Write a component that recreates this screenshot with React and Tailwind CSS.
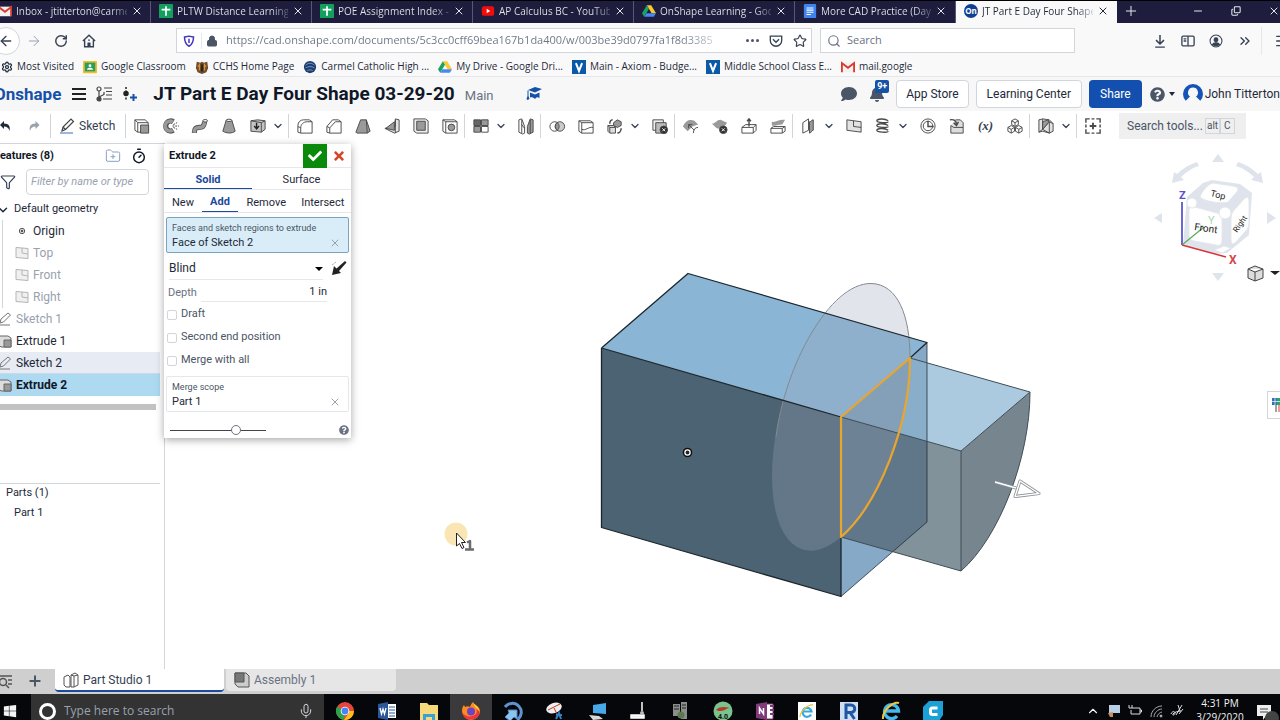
import {
  ArrowLeft,
  ArrowRight,
  ChevronDown,
  ChevronUp,
  ChevronsRight,
  Copy,
  Filter,
  FolderPlus,
  Lock,
  Menu,
  Mic,
  Minus,
  Plus,
  RotateCw,
  Search,
  Settings,
  Star,
  Timer,
  X,
} from "lucide-react";
import { FaBell, FaCheck, FaComment, FaQuestionCircle, FaTimes, FaWindows } from "react-icons/fa";

/* ---------- small brand icons ---------- */

const GmailIcon = () => (
  <svg viewBox="0 0 16 16" className="size-3.5 shrink-0" aria-hidden="true">
    <path d="M1 3h14v11H1z" fill="#f1f1f1" />
    <path d="M1 14V3.5l7 5.5 7-5.5V14" fill="none" stroke="#d93a2f" strokeWidth="2.2" />
  </svg>
);

const SheetsIcon = () => (
  <svg viewBox="0 0 16 16" className="size-3.5 shrink-0" aria-hidden="true">
    <rect width="16" height="16" rx="1" fill="#12a05c" />
    <path d="M8 2.5v11M3 6.5h10" stroke="#fff" strokeWidth="2" />
  </svg>
);

const YoutubeIcon = () => (
  <svg viewBox="0 0 16 16" className="size-3.5 shrink-0" aria-hidden="true">
    <rect x="1" y="2.5" width="14" height="11" rx="2.5" fill="#f20d0d" />
    <path d="M6.5 5.5v5l4-2.5z" fill="#fff" />
  </svg>
);

const DriveIcon = () => (
  <svg viewBox="0 0 16 16" className="size-3.5 shrink-0" aria-hidden="true">
    <path d="M5.5 1.5h5L16 10.5h-5z" fill="#fbc92d" />
    <path d="M5.5 1.5 0 10.5l2.5 4L8 5.5z" fill="#1aa260" />
    <path d="M5 10.5h11l-2.5 4h-11z" fill="#4688f4" />
  </svg>
);

const DocsIcon = () => (
  <svg viewBox="0 0 16 16" className="size-3.5 shrink-0" aria-hidden="true">
    <rect x="1" width="14" height="16" rx="1" fill="#3f83f1" />
    <path d="M4 4.5h8M4 7h8M4 9.5h8M4 12h5" stroke="#fff" strokeWidth="1.2" />
  </svg>
);

const OnIcon = () => (
  <span className="flex size-3.5 shrink-0 items-center justify-center rounded-full bg-[#0f3f94] text-[8px] font-bold text-white">On</span>
);

const ClassroomIcon = () => (
  <svg viewBox="0 0 16 16" className="size-3.5 shrink-0" aria-hidden="true">
    <rect y="1" width="16" height="14" rx="1" fill="#f2bd28" />
    <rect x="2" y="3" width="12" height="10" fill="#2b9e5b" />
    <circle cx="8" cy="6.5" r="1.6" fill="#fff" />
    <path d="M4.5 11c.5-3 6.5-3 7 0z" fill="#fff" />
  </svg>
);

const CrestIcon = () => (
  <svg viewBox="0 0 16 16" className="size-3.5 shrink-0" aria-hidden="true">
    <path d="M2 2l4 1 2-1 2 1 4-1 1 7-2 5-5 2-5-2-2-5z" fill="#6e4a2a" />
    <path d="M5 4v8M11 4v8M3 7h3M10 7h3" stroke="#d99a3c" strokeWidth="1.3" />
    <path d="M8 5v8" stroke="#2b1d1a" strokeWidth="2" />
  </svg>
);

const GlobeCrest = () => (
  <svg viewBox="0 0 16 16" className="size-3.5 shrink-0" aria-hidden="true">
    <circle cx="8" cy="8" r="7" fill="#1f3f70" />
    <path d="M3 6c3-3 7-3 10 0M3 9c3-2 7-2 10 0M5 12c2-1 4-1 6 0" fill="none" stroke="#7fa0cc" />
  </svg>
);

const VIcon = () => (
  <svg viewBox="0 0 16 16" className="size-3.5 shrink-0" aria-hidden="true">
    <rect width="16" height="16" fill="#0b5aa6" />
    <path d="M4.5 3.5 8 12.5l3.5-9" fill="none" stroke="#fff" strokeWidth="2.3" />
  </svg>
);

/* ---------- browser chrome ---------- */

const tabs = [
  { title: "Inbox - jtitterton@carme", icon: <GmailIcon /> },
  { title: "PLTW Distance Learning", icon: <SheetsIcon /> },
  { title: "POE Assignment Index -", icon: <SheetsIcon /> },
  { title: "AP Calculus BC - YouTub", icon: <YoutubeIcon /> },
  { title: "OnShape Learning - Goo", icon: <DriveIcon /> },
  { title: "More CAD Practice (Day", icon: <DocsIcon /> },
  { title: "JT Part E Day Four Shape", icon: <OnIcon />, active: true },
];

const TabStrip = () => (
  <header className="flex h-[23px] items-stretch overflow-hidden border-t border-black bg-[#1f1d3d] pb-0.5 text-[10px] text-gray-200">
    <div className="-mb-0.5 -ml-2.5 flex">
      {tabs.map(({ title, icon, active }) => (
        <div
          key={title}
          className={`flex w-[161px] items-center gap-1 border-r pr-2 pb-0.5 pl-2 ${
            active ? "border-[#f9f9fa] bg-[#f9f9fa] text-gray-800" : "border-[#5a5872]"
          }`}
        >
          {icon}
          <span
            className={`w-[111px] bg-linear-to-r from-85% to-100% bg-clip-text whitespace-nowrap text-transparent ${
              active ? "from-gray-800 to-gray-300" : "from-gray-200 to-gray-600"
            }`}
          >
            {title}
          </span>
          <button type="button" aria-label={`Close ${title}`} className="shrink-0">
            <X className="size-3" strokeWidth={2} />
          </button>
        </div>
      ))}
    </div>
    <button type="button" aria-label="New tab" className="px-1.5">
      <Plus className="size-4" strokeWidth={1.5} />
    </button>
    <div className="ml-auto flex items-center gap-[27px]">
      <button type="button" aria-label="Minimize"><Minus className="size-3" strokeWidth={2} /></button>
      <button type="button" aria-label="Restore"><Copy className="size-2.5 -scale-y-100" strokeWidth={2.5} /></button>
      <button type="button" aria-label="Close window"><X className="size-3" strokeWidth={2} /></button>
    </div>
  </header>
);

const NavBar = () => (
  <div className="flex h-[35px] items-center overflow-hidden bg-[#f9f9fa] text-gray-700">
    <button type="button" aria-label="Back" className="-ml-2 flex size-7 shrink-0 items-center justify-center rounded-full border border-gray-300 bg-white">
      <ArrowLeft className="size-4" />
    </button>
    <button type="button" aria-label="Forward" className="ml-1.5 text-gray-400"><ArrowRight className="size-4" strokeWidth={1.5} /></button>
    <button type="button" aria-label="Reload" className="ml-3"><RotateCw className="size-3.5" strokeWidth={2.5} /></button>
    <button type="button" aria-label="Home" className="ml-3.5">
      <svg viewBox="0 0 16 16" className="size-3.5" fill="none" stroke="currentColor" strokeWidth="1.6">
        <path d="M1 8l7-6.5L15 8M3 7v7.5h10V7" />
        <path d="M6.5 14v-4h3v4z" fill="currentColor" strokeWidth=".5" />
        <path d="M7 7h2" />
      </svg>
    </button>
    <div className="ml-20 flex h-[25px] min-w-0 flex-1 items-center border border-gray-300 bg-white pr-0.5 pl-1.5">
      <svg viewBox="0 0 16 16" className="size-3 shrink-0" fill="none" stroke="#4338c2" strokeWidth="2">
        <path d="M2 2.5c4 0 4-1 6-1s2 1 6 1c0 6-1 9.5-6 12.5C3 12 2 8.5 2 2.5z" />
        <path d="M8 5v5.5" />
      </svg>
      <span className="ml-1.5 h-4 w-px bg-gray-200" />
      <Lock className="ml-1 size-3 shrink-0 fill-gray-600 text-gray-600" />
      <input
        aria-label="Address"
        readOnly
        value="https://cad.onshape.com/documents/5c3cc0cff69bea167b1da400/w/003be39d0797fa1f8d3385"
        className="ml-2 min-w-0 flex-1 bg-linear-to-r from-gray-500 from-90% to-white to-100% bg-clip-text text-[11px] text-transparent outline-none"
      />
      <button type="button" aria-label="Page actions" className="ml-4 flex gap-0.5">
        <i className="size-[3px] rounded-full bg-gray-600" />
        <i className="size-[3px] rounded-full bg-gray-600" />
        <i className="size-[3px] rounded-full bg-gray-600" />
      </button>
      <button type="button" aria-label="Save to Pocket" className="ml-2.5">
        <svg viewBox="0 0 16 16" className="size-3.5" fill="none" stroke="currentColor" strokeWidth="1.5">
          <path d="M1.5 2.5h13v5a6.5 6.5 0 0 1-13 0z" />
          <path d="M4.5 6 8 9.5 11.5 6" />
        </svg>
      </button>
      <button type="button" aria-label="Bookmark" className="ml-2.5 pr-0.5"><Star className="size-3.5" /></button>
    </div>
    <label className="ml-2 flex h-[25px] w-[255px] items-center gap-1.5 border border-gray-300 bg-white px-1.5">
      <Search className="size-3.5 text-gray-500" />
      <input placeholder="Search" aria-label="Search the web" className="min-w-0 flex-1 bg-transparent text-[11px] outline-none placeholder:text-gray-500" />
    </label>
    <div className="flex items-center gap-3.5 pl-[78px]">
      <button type="button" aria-label="Downloads">
        <svg viewBox="0 0 16 16" className="size-3.5" fill="none" stroke="currentColor" strokeWidth="1.7">
          <path d="M8 1v10M3.5 7 8 11.5 12.5 7M2.5 15h11" />
        </svg>
      </button>
      <button type="button" aria-label="Sidebars">
        <svg viewBox="0 0 16 16" className="size-3.5" fill="none" stroke="currentColor" strokeWidth="1.5">
          <rect x="1" y="2.5" width="14" height="11" rx="1.5" />
          <path d="M8 2.5v11M3 5.5h3M3 8h3" />
        </svg>
      </button>
      <button type="button" aria-label="Account">
        <svg viewBox="0 0 16 16" className="size-3.5" fill="none" stroke="currentColor" strokeWidth="1.2">
          <circle cx="8" cy="8" r="6.8" />
          <circle cx="8" cy="6.5" r="2.2" fill="currentColor" />
          <path d="M4 12c1-2.5 7-2.5 8 0-2 2-6 2-8 0z" fill="currentColor" />
        </svg>
      </button>
      <button type="button" aria-label="More tools"><ChevronsRight className="size-4" /></button>
    </div>
    <button type="button" aria-label="Menu" className="-mr-2.5 ml-2 border-l border-gray-200 py-1.5 pl-3"><Menu className="size-4" /></button>
  </div>
);

const bookmarks = [
  { label: "Most Visited", icon: <Settings className="size-3" strokeWidth={2.5} /> },
  { label: "Google Classroom", icon: <ClassroomIcon /> },
  { label: "CCHS Home Page", icon: <CrestIcon /> },
  { label: "Carmel Catholic High ...", icon: <GlobeCrest /> },
  { label: "My Drive - Google Dri...", icon: <DriveIcon /> },
  { label: "Main - Axiom - Budge...", icon: <VIcon /> },
  { label: "Middle School Class E...", icon: <VIcon /> },
  { label: "mail.google", icon: <GmailIcon /> },
];

const Bookmarks = () => (
  <nav aria-label="Bookmarks" className="flex h-[19px] items-center gap-[9px] border-b border-gray-200 bg-[#f9f9fa] pb-px pl-px text-[10px] text-gray-800">
    {bookmarks.map(({ label, icon }) => (
      <a key={label} href="#" className="flex items-center gap-1 whitespace-nowrap">
        {icon}
        {label}
      </a>
    ))}
  </nav>
);

/* ---------- document header ---------- */

const DocHeader = () => (
  <div className="flex h-[34px] items-center overflow-hidden bg-[#f7f7f8] text-xs whitespace-nowrap text-gray-800">
    <span className="-ml-1.5 text-[17px] font-bold text-[#1651a8]">Onshape</span>
    <button type="button" aria-label="Main menu" className="ml-2.5">
      <svg viewBox="0 0 16 16" className="size-4" stroke="#222" strokeWidth="2.2"><path d="M1 3h14M1 8h14M1 13h14" /></svg>
    </button>
    <button type="button" aria-label="Versions" className="ml-2">
      <svg viewBox="0 0 18 16" className="h-4 w-[18px]" fill="none" stroke="#444" strokeWidth="1.2">
        <circle cx="4" cy="3" r="2" /><path d="M4 5v6l5-2.5V6" /><circle cx="4" cy="13" r="2" fill="#444" />
        <path d="M9 2h8M11 5.5h6M11 9h6M8 13h9" />
      </svg>
    </button>
    <button type="button" aria-label="Create version" className="ml-2">
      <svg viewBox="0 0 16 16" className="size-4" fill="none" stroke="#222" strokeWidth="1.5">
        <path d="M5 1v14" strokeDasharray="2 1.5" /><circle cx="5" cy="7.5" r="2" fill="#222" />
        <path d="M9 11.5h7M12.5 8v7" stroke="#1651a8" strokeWidth="2" />
      </svg>
    </button>
    <h1 className="ml-4 text-[19px] font-bold text-gray-900">JT Part E Day Four Shape 03-29-20</h1>
    <span className="mt-1 ml-2.5 text-[13px] text-gray-500">Main</span>
    <svg viewBox="0 0 16 16" className="ml-8 size-4" fill="#1651a8" aria-hidden="true">
      <path d="M2 4l7-3 7 2-7 3.5zM4 6.5l5 2 4.5-2V12c-2-1-3-1-4.5 1-1.500-1.5-3-2-5-1.500zM1.5 4.5h1V10l1 3-2 1-1-1 1-3z" />
    </svg>
    <div className="ml-auto flex items-center pl-4">
      <button type="button" aria-label="Comments"><FaComment className="size-4 text-gray-600" /></button>
      <button type="button" aria-label="Notifications" className="relative mr-[11px] ml-3">
        <FaBell className="size-4 text-gray-600" />
        <span className="absolute -top-1.5 left-1.5 rounded-xs bg-[#1651a8] px-0.5 text-[9px] leading-[13px] font-bold text-white">9+</span>
      </button>
      <button type="button" className="h-7 rounded-sm border border-gray-300 bg-white px-[9px]">App Store</button>
      <button type="button" className="ml-[7px] h-7 rounded-sm border border-gray-300 bg-white px-2.5">Learning Center</button>
      <button type="button" className="ml-[7px] h-7 rounded-sm bg-[#134fae] px-[11px] text-white">Share</button>
      <button type="button" aria-label="Help" className="ml-2 flex items-center gap-1">
        <FaQuestionCircle className="size-[15px] text-gray-600" />
        <span className="border-x-3 border-t-4 border-x-transparent border-t-gray-800" />
      </button>
      <a href="#" className="ml-2 flex items-center gap-0.5">
        <svg viewBox="0 0 20 20" className="size-5">
          <circle cx="10" cy="10" r="10" fill="#1553b7" />
          <path d="M10 3.5a5 5 0 0 0-3 9L2.5 17v3h15v-3L13 12.5a5 5 0 0 0-3-9z" fill="#f7f7f8" />
        </svg>
        John Titterton
      </a>
    </div>
  </div>
);

/* ---------- feature toolbar ---------- */

const g = "#9a9a9a";

const toolIcons = {
  Extrude: <><path d="M2 3h11l3 3v10H5l-3-2z" fill="#fff" /><path d="M2 3l3 3h11M5 6v10" /><path d="M8 8.5h8.5V17H8z" fill={g} /></>,
  Revolve: <><path d="M12 5A5.300 5.300 0 1 0 12 14" strokeWidth="5.5" stroke="#555" /><path d="M11.5 5.2A5.200 5.200 0 1 0 11.5 13.8" strokeWidth="3.6" stroke={g} /><path d="M11 9.5h7M12 8l4-2M12 11l4 2" strokeDasharray="2 1" /></>,
  Sweep: <><path d="M3.5 17c0-5 2-6 5-6 4 0 5-1 6-6" strokeWidth="5.4" stroke="#555" /><path d="M3.5 16.5c0-5 2-5.5 5-5.5 4 0 5-1 6-5.500" strokeWidth="3.600" stroke={g} /><ellipse cx="15" cy="4" rx="2.5" ry="1.3" fill="#fff" /></>,
  Loft: <><path d="M6.5 3.5h6L16 15c-3 2.5-9 2.5-13 0z" fill={g} /><ellipse cx="9.5" cy="3.5" rx="3" ry="1.2" fill="#fff" /></>,
  Thicken: <><path d="M2 4l7-1 8 1v9l-4 3-11-1z" fill="#c4c4c4" /><path d="M2 4l11 2 4-2M13 6v10" /><path d="M8 6v6m-2.5-2.5 2.500 3 2.500-3" strokeWidth="1.5" stroke="#222" /></>,
  Fillet: <><path d="M2 16V9c0-4 3-6 6-6h6l3 2v12H5z" fill="#fff" /><path d="M2 10l3 1.5V17M5 11.5C5 7.5 8 5 12 5h5" /></>,
  Chamfer: <><path d="M2 16v-6l6-7h6l3 2v12H5z" fill="#fff" /><path d="M2 10l3 1.5V17M5 11.5L11 5h6" /></>,
  Draft: <><path d="M2 16 7 3h6l4 12-3 2H3z" fill={g} /><path d="M13 3l1 14" /></>,
  Rib: <><path d="M2 12l10 5 5-2V3l-4-1v8z" fill="#e3e3e3" /><path d="M3 12l9-7v9z" fill={g} /><path d="M13 3v14" /></>,
  Shell: <><path d="M2 2h12l3 2v13H5l-3-2z" fill="#eee" /><path d="M5 4.5h9V14H5z" fill={g} /></>,
  Hole: <><path d="M2 3h12l3 2v12H5l-3-2z" fill="#fff" /><path d="M2 3l3 2h12M5 5v12" /><circle cx="11" cy="11" r="3.5" fill={g} /></>,
  "Linear pattern": <><path d="M10 3h7v6h-7zM2 10h7v6H2z" fill={g} /><path d="M10 10h7v6h-7z" fill="#fff" /><path d="M2 3h7v6H2z" fill="#666" /></>,
  Mirror: <><path d="M2 3l3-1 3 8v7l-2 1-4-2z" fill="#fff" /><path d="M5 3v14M5 8l3 4" /><path d="M17 3l-3-1-3 8v7l2 1 4-2z" fill={g} /><path d="M14 3v14" /></>,
  Boolean: <><circle cx="7" cy="10" r="5" /><circle cx="12.5" cy="10" r="5" fill="#ccc" /><path d="M9.8 6a5 5 0 0 1 0 8 5 5 0 0 1 0-8z" fill={g} /></>,
  Split: <><path d="M2 4h12l3 2v11H5l-3-2z" fill="#fff" /><path d="M2 4l3 2h12M5 6v11M5 13c4 2 7-3 12-2" /></>,
  Transform: <><path d="M2 9h6l2 2v6H4l-2-2z" fill="#ddd" /><path d="M2 9l2 2h6M4 11v6" /><path d="M8 6l4-3 4 2v4l-4 2-4-2z" fill={g} /><path d="M4 7c0-2 1-4 3-4M16 12c0 3-2 5-4 5" strokeWidth="1.6" /></>,
  "Delete part": <><path d="M2 3h11v11H2z" fill="#eee" /><path d="M5 6h11v11H5z" fill="#bbb" /><circle cx="13.5" cy="13.5" r="4" fill="#333" /><path d="M12 12l3 3m0-3-3 3" stroke="#fff" /></>,
  "Modify fillet": <><path d="M1 10c3-7 8-8 12-6l4 4-6 2-5 5z" fill={g} stroke="none" /><path d="M7 8l6 6m-6-6v4m0-4h4M12 17c0-4 2-6 5-6" /></>,
  "Delete face": <><path d="M1 7c4 0 5-4 9-4l7 3-5 7-6-1z" fill={g} stroke="none" /><circle cx="13" cy="13.5" r="4" fill="#333" /><path d="M11.5 12l3 3m0-3-3 3" stroke="#fff" /></>,
  "Move face": <><path d="M2 11l4-3h11v6l-3 3H2z" fill="#fff" /><path d="M2 11h12l3-3M14 11v6" /><path d="M9.5 10V2m-2 2.500 2-2.500 2 2.500" strokeWidth="1.5" /></>,
  "Replace face": <><path d="M2 12l3-2h12v5l-3 2H2z" fill="#fff" /><path d="M2 12h12l3-2M14 12v5" /><path d="M3 5c5 1 7-3 14-2l-3 5c-5 0-7 2-11 1z" fill={g} stroke="none" /></>,
  "Offset surface": <><path d="M3 6l6-4v12l-6 3z" fill="#fff" /><path d="M10 5c2 0 2-2 4-2v11c-2 0-2 3-4 3z" fill={g} /></>,
  Plane: <><path d="M2 3l15 2v11L2 14z" fill="#e3e3e3" /><path d="M9 4v6l8 1" /></>,
  Helix: <><path d="M15 4C11 1 3 2 3 4s12 3 12 1M15 9C11 6 3 7 3 9s12 3 12 1M15 14c-4-3-12-2-12 0s12 3 12 1" strokeWidth="1.4" /></>,
  "Mate connector": <><circle cx="9.5" cy="9.5" r="7.5" /><circle cx="9.5" cy="9.5" r="5" /><path d="M9.5 4v6h6" strokeWidth="1.5" /></>,
  Derived: <><path d="M3 9v8h13V6l-3-3H8" fill="#ddd" /><path d="M3 9l3 2h10" /><path d="M2 3c4-1 7 1 7 5m-3-2 3 3 2-4" strokeWidth="1.5" /></>,
  "Composite part": <><path d="M6 4l3.5-2L13 4v4l-3.5 2L6 8zM2 11l3.5-2L9 11v4l-3.5 2L2 15zM10 11l3.5-2 3.5 2v4l-3.5 2-3.5-2z" fill="#fff" /><path d="M6 4l3.5 2L13 4M9.5 6v4M2 11l3.5 2L9 11M5.5 13v4M10 11l3.5 2 3.5-2M13.5 13v4" /></>,
  "Sheet metal": <><path d="M2 3l4-1 7 1 4 4v8l-4 2-7-2-4 1z" fill="#e2e2e2" /><path d="M6 2v11l-4 3M6 13l7-8v12M13 5l4 2M6 13l7 4" /><path d="M6 5l6-2v3l-6 7z" fill={g} /></>,
  "Custom features": <><path d="M2 6V2h4M13 2h4v4M17 13v4h-4M6 17H2v-4M8 2h3M8 17h3M2 8v3M17 8v3" strokeWidth="1.5" /><path d="M9.5 6v7M6 9.5h7" strokeWidth="2" /></>,
};

const toolGroups = [
  ["Extrude", "Revolve", "Sweep", "Loft", "Thicken", "v"],
  ["Fillet", "Chamfer", "Draft", "Rib", "Shell", "Hole"],
  ["Linear pattern", "v", "Mirror"],
  ["Boolean", "Split", "Transform", "v", "Delete part"],
  ["Modify fillet", "Delete face", "Move face", "Replace face"],
  ["Offset surface", "v", "Plane", "Helix", "v", "Mate connector", "Derived", "Variable", "Composite part"],
  ["Sheet metal", "v"],
  ["Custom features"],
];

const ToolButton = ({ name }) => {
  if (name === "v") {
    return (
      <button type="button" aria-label="More" className="flex w-4 items-center">
        <ChevronDown className="size-3" strokeWidth={2.5} />
      </button>
    );
  }
  return (
    <button type="button" aria-label={name} className="flex w-[29px] items-center justify-center">
      {name === "Variable" ? (
        <span className="font-['Liberation_Serif',serif] text-[13px] font-bold italic">(x)</span>
      ) : (
        <svg viewBox="0 0 19 19" className="size-[18px]" fill="none" stroke="#4a4a4a" strokeWidth="1">
          {toolIcons[name]}
        </svg>
      )}
    </button>
  );
};

const Toolbar = () => (
  <div className="flex h-8 items-center overflow-hidden bg-white pb-0.5 text-xs whitespace-nowrap text-gray-700">
    <button type="button" aria-label="Undo" className="w-[11px] text-gray-800">
      <svg viewBox="0 0 11 12" className="h-3 w-[11px]" fill="currentColor"><path d="M0 5l4-4v2.5c5 0 6.500 3 5.500 7.500C9 8 7 6.500 4 6.500V9z" /></svg>
    </button>
    <button type="button" aria-label="Redo" className="ml-[17px] text-gray-400">
      <svg viewBox="0 0 11 12" className="h-3 w-3" fill="currentColor"><path d="M11 5L7 1v2.500C2 3.500.5 6.500 1.500 11 2 8 4 6.500 7 6.500V9z" /></svg>
    </button>
    <button type="button" className="ml-2.5 flex h-6 w-[75px] items-center gap-1 border-l border-gray-300 pl-2">
      <svg viewBox="0 0 16 16" className="size-4" fill="none" stroke="#444" strokeWidth="1.2">
        <path d="M3 13l1-4 8-8 2.5 2.5-8 8zM4 9l2.500 2.500" /><path d="M1 15h13" stroke="#5b87bd" />
      </svg>
      Sketch
    </button>
    {toolGroups.map((group) => (
      <div key={group[0]} className="flex h-6 border-l border-gray-300 pl-px">
        {group.map((name, i) => (
          <ToolButton key={name + i} name={name} />
        ))}
      </div>
    ))}
    <button type="button" className="ml-3 flex h-[26px] w-[127px] shrink-0 items-center bg-[#efefef] pl-2 text-gray-600">
      Search tools...
      <kbd className="ml-0.5 border border-gray-300 px-px font-[inherit] text-[10px]">alt</kbd>
      <kbd className="border border-gray-300 px-[3px] font-[inherit] text-[10px]">C</kbd>
    </button>
  </div>
);

/* ---------- feature list ---------- */

const PlaneGlyph = () => (
  <svg viewBox="0 0 14 14" className="size-3.5" fill="#f0f0f0" stroke="#b5b5b5"><path d="M1 1.5l12 1v10l-12-1z" /><path d="M7 2v5l6 1" fill="none" /></svg>
);
const PencilGlyph = () => (
  <svg viewBox="0 0 14 14" className="size-3.5" fill="none" stroke="#777"><path d="M2 11l1-4 7-6 2.5 2-7 7zM1 13h11" /></svg>
);
const ExtrudeGlyph = () => (
  <svg viewBox="0 0 14 14" className="size-3.5" fill="#ddd" stroke="#666"><path d="M1 2h9l3 2v9H3l-2-2z" /><path d="M6 6h7v7H6z" fill="#999" /></svg>
);
const OriginGlyph = () => (
  <svg viewBox="0 0 14 14" className="size-3.5" fill="none" stroke="#555"><circle cx="7" cy="7" r="2.7" /><circle cx="7" cy="7" r="1" fill="#333" /></svg>
);

const features = [
  { name: "Origin", icon: <OriginGlyph />, child: true, row: "text-gray-800" },
  { name: "Top", icon: <PlaneGlyph />, child: true, row: "text-gray-400" },
  { name: "Front", icon: <PlaneGlyph />, child: true, row: "text-gray-400" },
  { name: "Right", icon: <PlaneGlyph />, child: true, row: "text-gray-400" },
  { name: "Sketch 1", icon: <PencilGlyph />, row: "text-gray-400" },
  { name: "Extrude 1", icon: <ExtrudeGlyph />, row: "text-gray-800" },
  { name: "Sketch 2", icon: <PencilGlyph />, row: "bg-[#e7ebf3] border-b border-[#cbd8e8] text-gray-800" },
  { name: "Extrude 2", icon: <ExtrudeGlyph />, row: "bg-[#aedaf1] font-bold text-gray-900" },
];

const FeatureList = () => (
  <aside aria-label="Feature list" className="flex w-[165px] shrink-0 flex-col overflow-hidden border-t border-r border-gray-300 bg-white text-[11px] whitespace-nowrap">
    <div className="flex h-6 items-center">
      <h2 className="-ml-1.5 font-bold text-gray-900">Features (8)</h2>
      <button type="button" aria-label="New folder" className="ml-auto"><FolderPlus className="size-4 text-[#8aa0c4]" strokeWidth={1.5} /></button>
      <button type="button" aria-label="Rebuild timer" className="mr-[17px] ml-2.5"><Timer className="size-4 text-gray-900" strokeWidth={2.2} /></button>
    </div>
    <div className="flex h-[27px] items-center gap-2.5 pr-[15px]">
      <Filter className="size-4 shrink-0 text-gray-700" strokeWidth={1.8} />
      <input aria-label="Filter features" placeholder="Filter by name or type" className="h-[26px] w-full min-w-0 rounded-sm border border-gray-300 px-1 italic placeholder:text-gray-400" />
    </div>
    <button type="button" className="flex h-[25px] items-center gap-1 pt-1 text-gray-800">
      <ChevronDown className="-ml-1 size-3.5" strokeWidth={2.5} />
      Default geometry
    </button>
    <ul className="pr-1 text-xs">
      {features.map(({ name, icon, child, row }) => (
        <li key={name} className={`flex h-[22px] items-center ${row} ${child ? "ml-0.5 gap-1 border-l border-gray-300 pl-3" : "gap-1"}`}>
          <span className={child ? "" : "-ml-0.5"}>{icon}</span>
          {name}
        </li>
      ))}
    </ul>
    <div className="mt-2 mr-2 h-1.5 bg-[#c2c2c2]" />
    <div className="mt-[73px] mr-1 border-t border-gray-300 text-gray-800">
      <h2 className="flex h-[18px] items-center gap-1">
        <ChevronDown className="-ml-2.5 size-3" strokeWidth={2.5} />
        Parts (1)
      </h2>
      <p className="flex h-[22px] items-center pl-3.5">Part 1</p>
    </div>
  </aside>
);

/* ---------- extrude dialog ---------- */

const SelectionBox = ({ label, value, active }) => (
  <div className="px-0.5 pt-1">
    <div className={`h-9 rounded-xs border px-[5px] pt-1 ${active ? "border-[#7ba3bd] bg-[#d9edf8]" : "border-gray-200"}`}>
      <p className="text-[9px] leading-3 text-gray-600">{label}</p>
      <p className="flex items-center justify-between leading-[18px]">
        {value}
        <button type="button" aria-label={`Clear ${value}`} className="mr-0.5 text-gray-400"><X className="size-3" /></button>
      </p>
    </div>
  </div>
);

const ExtrudeDialog = () => (
  <section aria-label="Extrude 2" className="absolute top-px -left-px w-[187px] bg-white pb-0.5 text-[11px] text-gray-800 shadow-[0_2px_8px_rgba(0,0,0,0.35)]">
    <div className="flex h-6 items-center border-b border-gray-200 pl-[5px]">
      <h2 className="pt-0.5 font-bold text-gray-900">Extrude 2</h2>
      <button type="button" aria-label="Accept" className="ml-auto flex size-6 items-center justify-center bg-[#0a8a0a] text-white"><FaCheck className="size-3.5" /></button>
      <button type="button" aria-label="Cancel" className="flex size-6 items-center justify-center text-[#d2492a]"><FaTimes className="size-3.5" /></button>
    </div>
    <div className="flex h-[22px] border-b border-gray-200">
      <button type="button" className="w-[88px] border-b border-[#1b4a9c] pt-1 font-bold text-[#1b4a9c]">Solid</button>
      <button type="button" className="flex-1 pt-1">Surface</button>
    </div>
    <div className="flex h-[23px] border-b border-gray-200">
      <button type="button" className="w-[38px] pt-1">New</button>
      <button type="button" className="w-9 border-b border-[#1b4a9c] pt-1 font-bold text-[#1b4a9c]">Add</button>
      <button type="button" className="flex-1 pt-1">Remove</button>
      <button type="button" className="flex-1 pt-1">Intersect</button>
    </div>
    <SelectionBox label="Faces and sketch regions to extrude" value="Face of Sketch 2" active />
    <div className="flex h-[26px] items-center gap-2 pt-1 pr-1 pl-[5px]">
      <div className="relative flex-1 border-b border-gray-200">
        <select aria-label="End type" defaultValue="Blind" className="h-[22px] w-full appearance-none bg-transparent text-xs">
          <option>Blind</option>
        </select>
        <span className="pointer-events-none absolute top-2.5 right-0 border-x-4 border-t-4 border-x-transparent border-t-black" />
      </div>
      <button type="button" aria-label="Opposite direction">
        <svg viewBox="0 0 16 16" className="size-4"><path d="M1 15l2-9 2.5 2.5L14 1l1.500 1.500-7.500 8.500L10 13z" fill="#222" /><path d="M1 5l4-3" stroke="#aaa" strokeDasharray="2 1" /></svg>
      </button>
    </div>
    <label className="flex h-6 items-center pt-1 pr-6 pl-1 text-gray-500">
      Depth
      <input readOnly value="1 in" className="ml-1 min-w-0 flex-1 border-b border-gray-200 text-right text-gray-800" />
    </label>
    {["Draft", "Second end position", "Merge with all"].map((label) => (
      <label key={label} className="flex h-[23px] items-center gap-1 pl-[3px] text-gray-600">
        <input type="checkbox" className="size-2.5 appearance-none rounded-xs border border-gray-300" />
        {label}
      </label>
    ))}
    <SelectionBox label="Merge scope" value="Part 1" />
    <div className="flex h-6 items-center justify-between pt-3 pr-0.5 pl-1.5">
      <input
        type="range"
        aria-label="Preview opacity"
        defaultValue="71"
        className="h-2.5 w-24 appearance-none bg-[linear-gradient(#444,#444)] bg-[length:100%_1px] bg-center bg-no-repeat [&::-webkit-slider-thumb]:size-2.5 [&::-webkit-slider-thumb]:appearance-none [&::-webkit-slider-thumb]:rounded-full [&::-webkit-slider-thumb]:border [&::-webkit-slider-thumb]:border-gray-500 [&::-webkit-slider-thumb]:bg-white"
      />
      <FaQuestionCircle className="size-2.5 text-gray-500" />
    </div>
  </section>
);

/* ---------- 3D viewport ---------- */

const Model = () => (
  <svg viewBox="165 143 1115 526" className="size-full" fill="none" strokeLinejoin="round">
    <defs>
      <clipPath id="side"><path d="M841 417 927 342.5V522L841 596.5z" /></clipPath>
    </defs>
    {/* base block */}
    <path d="M601.5 348 688 273.5 927 342.5 841 417z" fill="#8ab5d4" />
    <path d="M601.5 348 841 417V596.5L601.5 527.5z" fill="#4c6373" />
    <path d="M841 417 927 342.5V522L841 596.5z" fill="#85a9c6" />
    {/* extrusion preview */}
    <path d="M841 417 910 358 1030 392 961 451z" fill="#abcae0" />
    <path d="M841 417 961 451V571L841 537z" fill="#82929a" />
    <path d="M961 451 1030 392C1030 458 999 538 961 571z" fill="#77858e" />
    <g clipPath="url(#side)">
      <path d="M841 417 910 358 1030 392 961 451z" fill="#89aec9" />
      <path d="M841 417 961 451V571L841 537z" fill="#60778a" />
    </g>
    <circle r="1" transform="matrix(69 -59 0 120 841 417)" fill="#9aa5b9" fillOpacity=".3" />
    <path d="M841 417V537C879 504 910 424 910 358z" fill="#60778a" fillOpacity=".2" />
    {/* sketch circle outline, visible part only */}
    <path d="M776 437C785 365 830 283 871 283.5 898 284 910 316 910 358" stroke="#84898f" />
    {/* edges */}
    <g stroke="#1c262d" strokeWidth="1.3">
      <path d="M601.5 348 688 273.5 927 342.5 910 358M601.5 348V527.5L841 596.5V537M601.5 348 841 417" />
      <path d="M841 596.5 927 522V342.5" strokeWidth="1" strokeOpacity=".75" />
    </g>
    <g stroke="#3f4d57" strokeWidth="1">
      <path d="M910 358 1030 392 961 451 841 417M961 451V571L841 537" />
      <path d="M1030 392C1030 458 999 538 961 571" />
    </g>
    <path d="M841 417 910 358C910 424 879 504 841 537z" stroke="#eaa52c" strokeWidth="2.2" />
    {/* origin */}
    <circle cx="687.5" cy="452.5" r="3.3" stroke="#111" strokeWidth="3" />
    <circle cx="687.5" cy="452.5" r="2.6" fill="#222" stroke="#fff" strokeWidth="1.3" />
    {/* direction manipulator */}
    <path d="M995 482l21 6M1020 481l19 12.5-24 3z" stroke="#8b9095" strokeWidth="3" />
    <path d="M995 482l21 6M1020 481l19 12.5-24 3z" stroke="#fff" strokeWidth="1.4" />
    {/* pointer */}
    <circle cx="456" cy="534" r="11.5" fill="#fae6b4" />
    <path d="M456.5 533v13l3-2.5 2.5 5 2-1-2.5-5h4z" fill="#fff" stroke="#222" />
    <path d="M465 549.5h9M467 542.5l3-1.500v8" stroke="#6b6b6b" strokeWidth="2.5" />
  </svg>
);

const ViewCube = () => (
  <svg viewBox="0 0 130 150" className="absolute top-0.5 right-0 h-[150px] w-[130px]" fontFamily="Roboto, sans-serif">
    <g fill="#dfe4ec">
      <path d="M62 17l6-8 6 8zM4 73l8-5v10zM126 73l-9-6v12zM62 128l6 8 6-8z" />
      <path d="M22 38l2-11 3 2c6-6 13-10 20-12l2 4c-7 2-13 6-18 11l3 3zM113 38l-2-11-3 2c-6-6-13-10-20-12l-2 4c7 2 13 6 18 11l-3 3z" />
      <path d="M37 52l16-14 9-3 28 4 12 9-3 42-22 18-12 1-32-9z" />
    </g>
    <g fill="#fff" stroke="#e3e7ed">
      <path d="M50 52c2-6 8-13 13-14l20 3c6 1 6 4 3 7l-8 9c-3 2-24 0-28-5z" />
      <path d="M39 66c0-4 2-5 6-4l22 6c4 1 5 3 5 7v20c0 5-2 6-6 5l-22-4c-4-1-5-3-5-6z" />
      <path d="M81 73c0-4 2-7 5-10l8-9c3-3 5-2 5 2v22c0 4-2 7-5 10l-8 9c-3 3-5 2-5-2z" />
      <circle cx="42" cy="58" r="5" /><circle cx="75" cy="68" r="6" /><path d="M64 105l10-4 7 2-9 5z" />
    </g>
    <path d="M32 100V57" stroke="#3a34c8" strokeWidth="1.5" />
    <path d="M32 100l22-18" stroke="#5aae5a" strokeWidth="1.3" />
    <path d="M32 100l44 12" stroke="#d8333a" strokeWidth="1.5" />
    <text x="29" y="54" fontSize="11" fontWeight="bold" fill="#5a50d0">Z</text>
    <text x="79" y="119" fontSize="12" fontWeight="bold" fill="#d6454a">X</text>
    <text x="58" y="79" fontSize="11" fill="#a8d8b0">Y</text>
    <g fontSize="10" fill="#222">
      <text transform="translate(44 85) rotate(8)">Front</text>
      <text transform="translate(87 88) rotate(-55)" fontSize="8">Right</text>
      <text transform="translate(60 51) rotate(14)" fontSize="9">Top</text>
    </g>
    <path d="M98 124l7-3 8 3v9l-8 3-7-3z" fill="#ddd" stroke="#444" />
    <path d="M98 124l7 3 8-3" fill="#fff" stroke="#444" /><path d="M105 127v9" stroke="#444" />
    <path d="M120 126h10l-5 4z" fill="#222" />
  </svg>
);

const Viewport = () => (
  <main className="relative min-w-0 flex-1 bg-white">
    <Model />
    <ViewCube />
    <button type="button" aria-label="Tables" className="absolute top-[248px] right-0 h-7 w-[13px] overflow-hidden border border-r-0 border-gray-300 bg-white pl-1">
      <svg viewBox="0 0 8 16" className="h-4 w-2"><path d="M0 1h8v7H0z" fill="#2f6fc0" /><path d="M5 1h3v7H5z" fill="#2ea36b" /><path d="M0 4.5h8M3 1v7" stroke="#fff" strokeWidth=".7" /><path d="M4 8v7" stroke="#444" /><path d="M7 8v7" stroke="#d33" /></svg>
    </button>
    <ExtrudeDialog />
  </main>
);

/* ---------- element tabs and taskbar ---------- */

const ElementTabs = () => (
  <nav aria-label="Document tabs" className="flex h-[25px] items-start bg-[#cfcfcf] text-xs text-gray-700">
    <button type="button" aria-label="Tab manager" className="mt-1 -ml-1">
      <svg viewBox="0 0 16 16" className="size-4" fill="none" stroke="#555" strokeWidth="1.5"><path d="M1 3h15M12 7h4M12 11h4M10 12l3 3" /><circle cx="7" cy="9" r="3.5" /></svg>
    </button>
    <button type="button" aria-label="Add tab" className="mt-1 ml-[15px]"><Plus className="size-4 text-gray-600" strokeWidth={3} /></button>
    <a href="#" className="ml-3 flex h-[23px] w-[169px] items-center gap-1 rounded-b-sm border-b-2 border-[#1b4aa0] bg-white pl-2">
      <svg viewBox="0 0 16 16" className="size-4" fill="none" stroke="#555"><path d="M1 5l4-2 2 2v10H3l-2-2zM8 3l4-2 3 2v10l-4 2H8zM11 4v11M11 4l4-1M8 3l3 1" /></svg>
      Part Studio 1
    </a>
    <a href="#" className="ml-0.5 flex h-[22px] w-[170px] items-center gap-1 rounded-b-sm bg-[#e6e6e6] pl-2 text-gray-500">
      <svg viewBox="0 0 16 16" className="size-4" fill="#ccc" stroke="#555"><path d="M1 1h11l3 3v11H4l-3-3z" /><path d="M1 1h9v9H1z" fill="#777" /></svg>
      Assembly 1
    </a>
  </nav>
);

const taskIcons = [
  { name: "Chrome", art: <><circle cx="10" cy="10" r="9" fill="#e8453c" /><path d="M10 10 2.2 5.5A9 9 0 0 0 9 19z" fill="#2ba24c" /><path d="M10 10h9a9 9 0 0 1-10 9l5-7z" fill="#fbc116" /><circle cx="10" cy="10" r="4.3" fill="#fff" /><circle cx="10" cy="10" r="3.4" fill="#4285f4" /></> },
  { name: "Word", art: <><path d="M9 3h10v14H9z" fill="#fff" /><path d="M12 6h6M12 9h6M12 12h6M12 15h6" stroke="#2b579a" /><path d="M1 3l10-2v18L1 17z" fill="#2b579a" /><path d="M3 7l1.5 6L6 8l1.5 5L9 7" fill="none" stroke="#fff" strokeWidth="1.3" /></> },
  { name: "File Explorer", art: <><path d="M1 2h7l2 2h9v15H1z" fill="#f6d978" /><path d="M4 19v-6h12v6h-3v-3H7v3z" fill="#38a1dc" /></> },
  { name: "Firefox", active: true, art: <><path d="M10 19a9 9 0 0 1-9-9c0-3 1-5 2-6l1 2c2-1 4-1 5 0 1-3 2-4 3-5 1 3 7 4 7 9a9 9 0 0 1-9 9z" fill="#ff8a1e" /><path d="M1 11c3 5 10 6 14 2 1-2 1-4 0-6 3 2 4 4 3 7-4 7-15 6-17-3z" fill="#f0343f" /><circle cx="10" cy="10.5" r="4" fill="#6b42c8" /><path d="M12 2c2 2 6 4 6 8l-3-3z" fill="#ffd43a" /></> },
  { name: "Migration", art: <><path d="M2 6A9 9 0 1 1 14 19" fill="none" stroke="#5f93cf" strokeWidth="3" /><path d="M5 9h9v9l-3-2-4 4-5-4 4-4z" fill="#8cc4ef" stroke="#4f86c2" /></> },
  { name: "Snipping Tool", art: <><ellipse cx="9" cy="7" rx="8" ry="5" fill="#eee" transform="rotate(-20 9 7)" /><path d="M3 9l12-6M9 7l3 6" stroke="#c0392b" /><path d="M11 18l3-6 2 6m1-4-6 0" fill="none" stroke="#2f83c5" strokeWidth="2" /></> },
  { name: "Remote Desktop", art: <><path d="M6 4l13-2v11L6 12z" fill="#48a8ea" /><path d="M2 14l10 1 4 3-10 1z" fill="#d9d9d9" /></> },
  { name: "Machine", art: <><path d="M2 14h13v3H2zM13 1v9" stroke="#fff" strokeWidth="1.5" fill="#eee" /><circle cx="13" cy="12" r="2" fill="#bbb" /></> },
  { name: "Controller", art: <><path d="M2 3h7v12H2zM10 1h6v17h-6z" fill="#8b8f8b" /><path d="M3 5h5M3 8h5M11 4h4M11 7h4" stroke="#222" /><circle cx="10" cy="14" r="3.5" fill="#5c7a4d" /></> },
  { name: "RobotC 4.0", art: <><circle cx="10" cy="10" r="9.5" fill="#79c48d" /><path d="M3 9c4-4 9-3 14-2-4 0-5 3-9 3-2 0-3 0-5-1z" fill="#b9392c" /><text x="5" y="17.5" fontSize="7" fontWeight="bold" fill="#111">4.0</text></> },
  { name: "OneNote", art: <><path d="M10 3h8v15h-8z" fill="#fff" stroke="#80397b" /><path d="M15 5h4M15 9h4M15 13h4" stroke="#80397b" strokeWidth="2" /><path d="M1 3l11-2v18L1 17z" fill="#80397b" /><path d="M4.5 13V7l4 6V7" fill="none" stroke="#fff" strokeWidth="1.5" /></> },
  { name: "Internet Explorer", art: <><path d="M1 1h18v18H1z" fill="#fff" /><path d="M14 13.5a4.5 4.5 0 1 1 .5-3H6" fill="none" stroke="#35a7e0" strokeWidth="2.2" /><path d="M3 16C3 10 12 3 16 4" fill="none" stroke="#f0c33b" strokeWidth="1.3" /></> },
  { name: "Revit", art: <><path d="M1 1h18v18H1z" fill="#cfe0f2" /><path d="M7 18V4h5a3.5 3.5 0 0 1 0 7.5H7m4 0 4.5 6.5" fill="none" stroke="#1f57a4" strokeWidth="3" /></> },
  { name: "Edge Legacy", art: <><path d="M16 15a7 7 0 1 1 1.5-5H5" fill="none" stroke="#45b9ee" strokeWidth="3.3" /><path d="M2 18C1 10 12 0 18 2" fill="none" stroke="#f2c53c" strokeWidth="2" /></> },
  { name: "Cura", art: <><path d="M6 0h14v14l-4 6H0V6z" fill="#1ba1d6" /><path d="M14.5 7H9.5a2 2 0 0 0-2 2v2.5a2 2 0 0 0 2 2h5" fill="none" stroke="#fff" strokeWidth="3" /></> },
];

const Taskbar = () => (
  <footer className="flex h-[26px] items-stretch overflow-hidden bg-[#05070a] text-gray-100">
    <button type="button" aria-label="Start" className="flex w-[31px] items-center pt-2 pl-[3px]"><FaWindows className="size-3.5" /></button>
    <label className="flex w-[293px] shrink-0 items-center gap-2 bg-[#333] px-2 pt-2">
      <span className="size-[17px] rounded-full border-[3px] border-white" />
      <input aria-label="Type here to search" placeholder="Type here to search" className="min-w-0 flex-1 bg-transparent text-xs placeholder:text-gray-400" />
      <Mic className="mr-0.5 size-4 text-gray-300" strokeWidth={1.5} />
    </label>
    {taskIcons.map(({ name, active, art }) => (
      <button key={name} type="button" aria-label={name} className={`flex w-[42px] items-start justify-center pt-[7px] ${active ? "bg-[#3a3a3c]" : ""}`}>
        <svg viewBox="0 0 20 20" className="size-5">{art}</svg>
      </button>
    ))}
    <div className="ml-auto flex items-center gap-[7px] pt-2">
      <ChevronUp className="size-3.5" />
      <svg viewBox="0 0 14 14" className="size-3.5"><path d="M2 1h11v8H2z" fill="#b8cfe6" /><path d="M1 9l5-1v5H3z" fill="#c98e5e" /></svg>
      <svg viewBox="0 0 14 14" className="size-3.5" fill="none" stroke="#ddd"><path d="M4 4h8v6H3V6M12 6h1.5v2H12M1 1v3h3V1" /></svg>
      <svg viewBox="0 0 14 14" className="size-3.5" fill="none" stroke="#aaa"><path d="M2 13C2 7 7 2 13 2M5 13c0-4 4-8 8-8M8 13c0-2 3-5 5-5" /><circle cx="12" cy="12" r="1" fill="#ddd" /></svg>
      <svg viewBox="0 0 14 14" className="size-3.5" fill="none" stroke="#ddd"><path d="M12 1 6 11M13 5l-4 5M1 10c1-3 4-3 4-1s-3 3-2 1 6-3 8-3M8 1l2 6" /></svg>
    </div>
    <time className="ml-3 flex w-12 flex-col items-center pt-0.5 text-[10px] leading-[14px]">
      <span>4:31 PM</span>
      <span>3/29/2020</span>
    </time>
    <svg viewBox="0 0 24 24" className="mt-2.5 ml-3 size-6"><path d="M1 1h14v11H10l-3 4v-4H1z" fill="#eee" /><path d="M4 5h8M4 8h8" stroke="#444" strokeWidth="1.2" /><circle cx="16" cy="14" r="7" fill="#444" /></svg>
  </footer>
);

export default function App() {
  return (
    <div className="flex min-h-screen flex-col overflow-hidden bg-white font-['Roboto',sans-serif]">
      <div className="font-['Open_Sans',sans-serif]">
        <TabStrip />
        <NavBar />
        <Bookmarks />
      </div>
      <DocHeader />
      <Toolbar />
      <div className="flex flex-1">
        <FeatureList />
        <Viewport />
      </div>
      <ElementTabs />
      <div className="font-['Open_Sans',sans-serif]">
        <Taskbar />
      </div>
    </div>
  );
}
